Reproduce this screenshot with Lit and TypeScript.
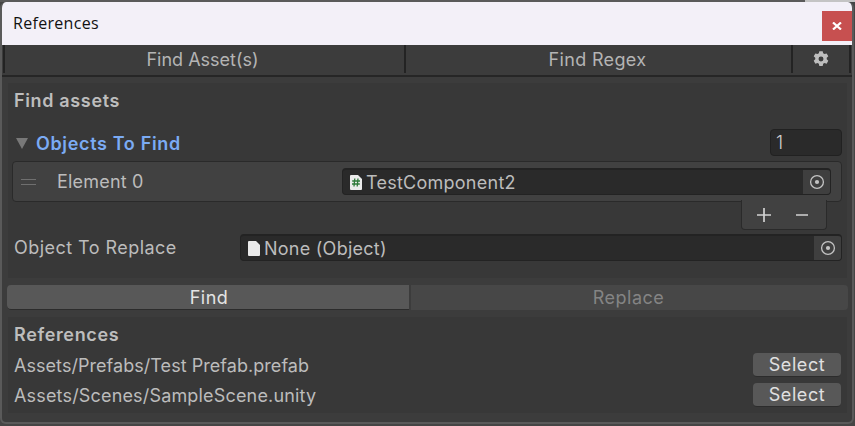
import { LitElement, css, html, svg } from "lit";
import { customElement } from "lit/decorators.js";

const targetIcon = html`<svg class="target" width="16" height="16" viewBox="0 0 16 16">
  <circle cx="8" cy="8" r="6.4" fill="none" stroke="#c4c4c4" stroke-width="1.3"></circle>
  <circle cx="8" cy="8" r="2.1" fill="#c4c4c4"></circle>
</svg>`;

const pageShape = svg`<path d="M1 0H8L12 4V14a1 1 0 0 1-1 1H1a1 1 0 0 1-1-1V1a1 1 0 0 1 1-1z" fill="#ebebeb"></path>`;

@customElement("app-root")
export class AppRoot extends LitElement {
  static styles = css`
    :host {
      display: block;
      width: 855px;
      height: 426px;
      overflow: hidden;
      background: linear-gradient(90deg, #5a5a5a 805px, #c4c4c4 805px) top / 100% 2px no-repeat, #454545;
      font-family: Inter, "Noto Sans", sans-serif;
      font-size: 18px;
      color: #bcbcbc;
    }

    .window {
      display: flex;
      flex-direction: column;
      box-sizing: border-box;
      width: 854px;
      height: 422px;
      margin-top: 2px;
      border: 2px solid #5a5a5a;
      border-top: none;
      background: #3c3c3c;
      border-radius: 6px;
      overflow: hidden;
    }

    .titlebar {
      display: flex;
      flex: none;
      height: 43px;
      background: #f3f0f8;
      color: #111;
      font-family: "Open Sans", sans-serif;
      font-size: 16px;
      letter-spacing: 0.3px;
      line-height: 43px;
      padding-left: 11px;
      justify-content: space-between;
    }

    .close {
      display: flex;
      align-items: center;
      justify-content: center;
      width: 30px;
      height: 30px;
      margin-top: 9px;
      background: #c75050;
    }

    .tabs {
      display: grid;
      flex: none;
      grid-template-columns: 401px 387px 60px;
      box-sizing: border-box;
      height: 32px;
      padding: 0 1px 2px;
      border-bottom: 2px solid #262626;
      margin-bottom: 6px;
    }

    .tab {
      display: flex;
      align-items: center;
      justify-content: center;
      border-left: 2px solid #232323;
      color: #b4b4b4;
    }

    .tab-assets {
      padding-right: 4px;
    }

    .tab-regex {
      padding-right: 2px;
      letter-spacing: 0.35px;
    }

    .tab:last-child {
      border-right: 2px solid #232323;
    }

    .panel {
      flex: none;
      box-sizing: border-box;
      width: 839px;
      margin-left: 6px;
      background: #383838;
    }

    .find-panel {
      height: 195px;
      padding: 8px 5px 0 6px;
    }

    .heading {
      font-weight: 600;
      letter-spacing: 0.65px;
      line-height: 20px;
      color: #bdbdbd;
    }

    .list-head {
      display: flex;
      align-items: center;
      justify-content: space-between;
      height: 27px;
      margin-top: 18px;
      padding-left: 2px;
    }

    .list-title {
      display: flex;
      align-items: center;
      gap: 8px;
      font-weight: 600;
      letter-spacing: 0.65px;
      color: #7babf4;
      padding-top: 2px;
    }

    .caret {
      width: 0;
      height: 0;
      border-left: 6px solid transparent;
      border-right: 6px solid transparent;
      border-top: 11px solid #787878;
    }

    .count {
      box-sizing: border-box;
      width: 72px;
      height: 27px;
      padding-left: 5px;
      border: 1px solid #212121;
      border-radius: 4px;
      background: #2a2a2a;
      line-height: 25px;
      font-weight: 300;
      color: #d0d0d0;
    }

    .list-box {
      display: flex;
      align-items: center;
      box-sizing: border-box;
      height: 41px;
      margin: 5px 0 0 -2px;
      padding: 0 10px 0 8px;
      border: 1px solid #2a2a2a;
      border-radius: 4px;
      background: #414141;
    }

    .grip {
      flex: none;
      box-sizing: border-box;
      width: 15px;
      height: 6px;
      border-top: 1px solid #6f6f6f;
      border-bottom: 1px solid #6f6f6f;
    }

    .element-label {
      flex: none;
      width: 285px;
      margin-left: 21px;
      letter-spacing: 0.2px;
    }

    .field {
      display: flex;
      align-items: center;
      box-sizing: border-box;
      flex: 1;
      height: 27px;
      padding-left: 7px;
      border: 1px solid #232323;
      border-top-width: 2px;
      border-radius: 4px;
      background: #2a2a2a;
      letter-spacing: 0.25px;
      overflow: hidden;
    }

    .field svg.file {
      flex: none;
      margin-right: 4px;
    }

    .field .value {
      flex: 1;
    }

    .picker {
      display: flex;
      align-items: center;
      justify-content: center;
      flex: none;
      width: 27px;
      height: 100%;
      background: #3f3f3f;
    }

    .list-foot {
      display: flex;
      align-items: center;
      gap: 23px;
      box-sizing: border-box;
      width: 86px;
      height: 30px;
      margin: -2px 0 0 727px;
      padding: 0 0 0 14px;
      border: 1px solid #2a2a2a;
      border-top: none;
      border-radius: 0 0 4px 4px;
      background: #414141;
      position: relative;
    }

    .row {
      display: flex;
      align-items: center;
      margin-top: 4px;
    }

    .row-label {
      flex: none;
      width: 226px;
      letter-spacing: 0.45px;
    }

    .actions {
      display: grid;
      flex: none;
      grid-template-columns: 402px 437px;
      gap: 2px;
      height: 25px;
      margin: 7px 0 7px 5px;
    }

    .action {
      display: flex;
      align-items: center;
      justify-content: center;
      border-radius: 4px;
      letter-spacing: 0.5px;
    }

    .find {
      background: #585858;
      box-shadow: inset 0 -1px 0 #2c2c2c;
      color: #e4e4e4;
      border-radius: 4px 0 0 4px;
      padding-left: 2px;
    }

    .replace {
      background: #474747;
      color: #848484;
      border-radius: 0 4px 4px 0;
      padding-right: 2px;
    }

    .results {
      height: 96px;
      padding: 8px 6px 0;
    }

    .result {
      display: flex;
      align-items: center;
      justify-content: space-between;
      height: 24px;
      margin-top: 6px;
      letter-spacing: 0.05px;
    }

    .result + .result {
      letter-spacing: 0.17px;
    }

    .results .heading {
      margin-bottom: 8px;
    }

    .select {
      display: flex;
      align-items: center;
      justify-content: center;
      box-sizing: border-box;
      width: 88px;
      height: 24px;
      border-bottom: 1px solid #2c2c2c;
      border-radius: 4px;
      background: #585858;
      color: #e0e0e0;
      letter-spacing: 0.6px;
    }
  `;

  render() {
    return html`
      <div class="window">
        <div class="titlebar">
          <span>References</span>
          <div class="close">
            <svg width="10" height="8" viewBox="0 0 10 8">
              <path d="M1 0.5L9 7.5M9 0.5L1 7.5" stroke="#fff" stroke-width="2.2"></path>
            </svg>
          </div>
        </div>
        <div class="tabs">
          <div class="tab tab-assets">Find Asset(s)</div>
          <div class="tab tab-regex">Find Regex</div>
          <div class="tab">
            <svg width="18" height="18" viewBox="0 0 16 16">
              <path
                fill-rule="evenodd"
                fill="#bdbdbd"
                d="M6.5 1h3l.4 1.900 1.200.7 1.900-.6 1.500 2.600-1.400 1.300v1.400l1.400 1.300-1.500 2.600-1.900-.6-1.200.7-.4 1.900h-3l-.4-1.900-1.200-.7-1.900.6-1.500-2.600 1.400-1.300V6.900L1.500 5.600 3 3l1.900.6 1.200-.7zM8 5.800a2.200 2.200 0 1 0 0 4.400 2.200 2.200 0 0 0 0-4.400z"
              ></path>
            </svg>
          </div>
        </div>
        <div class="panel find-panel">
          <div class="heading">Find assets</div>
          <div class="list-head">
            <div class="list-title"><span class="caret"></span>Objects To Find</div>
            <div class="count">1</div>
          </div>
          <div class="list-box">
            <span class="grip"></span>
            <span class="element-label">Element 0</span>
            <div class="field">
              <svg class="file" width="12" height="15" viewBox="0 0 12 15">
                ${pageShape}
                <path
                  d="M4.800 3.500L4 11.500M8 3.500L7.200 11.500M2.200 6H10M2 9H9.800"
                  stroke="#2f7a3a"
                  stroke-width="1.300"
                  fill="none"
                ></path>
              </svg>
              <span class="value">TestComponent2</span>
              <span class="picker">${targetIcon}</span>
            </div>
          </div>
          <div class="list-foot">
            <svg width="16" height="16" viewBox="0 0 16 16">
              <path d="M8 1V15M1 8H15" stroke="#d2d2d2" stroke-width="1.700"></path>
            </svg>
            <svg width="14" height="16" viewBox="0 0 14 16">
              <path d="M1 8H13" stroke="#d2d2d2" stroke-width="1.700"></path>
            </svg>
          </div>
          <div class="row">
            <span class="row-label">Object To Replace</span>
            <div class="field">
              <svg class="file" width="12" height="15" viewBox="0 0 12 15">${pageShape}</svg>
              <span class="value">None (Object)</span>
              <span class="picker">${targetIcon}</span>
            </div>
          </div>
        </div>
        <div class="actions">
          <div class="action find">Find</div>
          <div class="action replace">Replace</div>
        </div>
        <div class="panel results">
          <div class="heading">References</div>
          <div class="result">
            <span>Assets/Prefabs/Test Prefab.prefab</span>
            <span class="select">Select</span>
          </div>
          <div class="result">
            <span>Assets/Scenes/SampleScene.unity</span>
            <span class="select">Select</span>
          </div>
        </div>
      </div>
    `;
  }
}

declare global {
  interface HTMLElementTagNameMap {
    "app-root": AppRoot;
  }
}
